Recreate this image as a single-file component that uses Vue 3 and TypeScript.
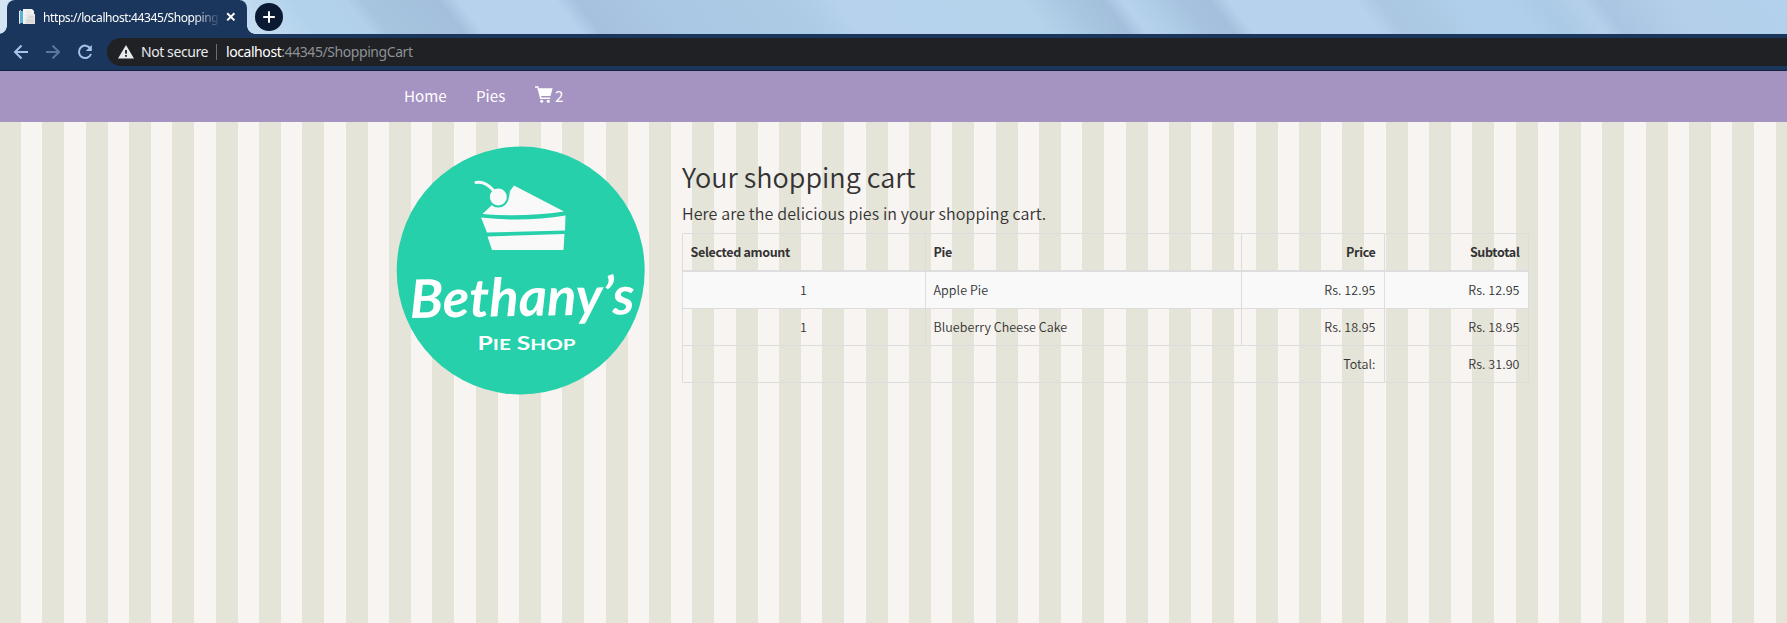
<script setup lang="ts">
interface CartLine {
  amount: number
  name: string
  price: number
}

const lines: CartLine[] = [
  { amount: 1, name: 'Apple Pie', price: 12.95 },
  { amount: 1, name: 'Blueberry Cheese Cake', price: 18.95 },
]

const money = (value: number): string => `Rs. ${value.toFixed(2)}`
const total = lines.reduce((sum, line) => sum + line.amount * line.price, 0)
const count = lines.reduce((sum, line) => sum + line.amount, 0)

const sheen: [number, string][] = [
  [0, '#d3e4f4'], [235, '#c4dcf1'], [290, '#b2d2ec'], [345, '#b2d0ea'], [362, '#a8c5e0'],
  [438, '#a3bfdb'], [458, '#b6d2ed'], [555, '#b6d2ed'], [576, '#a6c1de'], [660, '#aac7e3'],
  [790, '#adcbe5'], [835, '#b6d2ec'], [1020, '#b6d3ec'], [1070, '#a9c6e0'], [1102, '#a3bfdb'],
  [1122, '#b6d2ed'], [1150, '#b0cde8'], [1180, '#a6c2de'], [1208, '#a3bfdb'], [1228, '#b6d2ed'],
  [1355, '#b6d2ed'], [1378, '#abc7e2'], [1420, '#adcae4'], [1455, '#b0cfeb'], [1510, '#b0cfeb'],
  [1540, '#abcae5'], [1580, '#b5d0eb'], [1600, '#a9c5e1'], [1640, '#afcbe6'], [1670, '#b4cfea'], [1787, '#b2d1ec'],
]
</script>

<template>
  <div class="window">
    <header class="tabstrip">
      <svg class="sheen" width="1787" height="34">
        <defs>
          <linearGradient id="sheen" gradientUnits="userSpaceOnUse" x1="0" y1="0" x2="1787" y2="0" gradientTransform="skewX(38)">
            <stop v-for="[x, color] in sheen" :key="x" :offset="x / 1787" :stop-color="color" />
          </linearGradient>
        </defs>
        <rect width="1787" height="34" fill="url(#sheen)" />
      </svg>
      <div class="tab">
        <svg class="favicon" width="16" height="16" viewBox="0 0 16 16">
          <path d="M0 2 2 1v13l-2 1z" fill="#eee" />
          <path d="M1 2h3v12H1z" fill="#5fb0d8" />
          <path d="M4 0h9l2 2v13H4z" fill="#f3f3f2" />
          <path d="M7 3h5M6 6h3M6 9h3" stroke="#dcdcdc" />
          <path d="M8 5h8v10H6v-5h2z" fill="#e5e5e5" />
          <path d="M9 8h6M8 11h7M8 13h7" stroke="#ccc" />
        </svg>
        <span class="tab-title">https://localhost:44345/Shopping</span>
        <svg class="close" width="10" height="10" viewBox="0 0 10 10"><path d="m1.2 1.2 7.2 7.2m0-7.2L1.2 8.4" /></svg>
      </div>
      <div class="new-tab">
        <svg width="14" height="14" viewBox="0 0 14 14"><path d="M7 1.2v11.6M1.2 7h11.6" /></svg>
      </div>
    </header>
    <div class="toolbar">
      <svg class="tool" width="16" height="16" viewBox="0 0 16 16"><path d="M15 8H2m6.5-6.5L2 8l6.5 6.5" /></svg>
      <svg class="tool dim" width="16" height="16" viewBox="0 0 16 16"><path d="M1 8h13M7.500 1.500 14 8l-6.500 6.500" /></svg>
      <svg class="tool" width="16" height="16" viewBox="0 0 16 16">
        <path d="M13.300 4.300A6.200 6.200 0 1 0 14 10" /><path class="fill" d="M14.800 1v6H8.800z" />
      </svg>
      <div class="address">
        <svg class="warn" width="16" height="14" viewBox="0 0 16 14">
          <path d="M8 0 16 13.500H0z" fill="#e8eaed" /><path d="M8 5v3.800M8 10v1.800" stroke="#202124" stroke-width="1.800" />
        </svg>
        <span class="insecure">Not secure</span>
        <i class="divider"></i>
        <span class="url"><b>localhost</b>:44345/ShoppingCart</span>
      </div>
    </div>
    <nav class="nav">
      <a class="home">Home</a>
      <a class="pies">Pies</a>
      <a class="cart">
        <svg width="18" height="18" viewBox="0 0 18 18">
          <path d="M0 .3h3.300L4 2.200h13.600L15.500 10H6l.4 1.600h8.800V13H5.200L2.300 1.700H0z" fill="#fff" />
          <circle cx="6.700" cy="15.300" r="1.500" fill="#fff" /><circle cx="13.300" cy="15.300" r="1.500" fill="#fff" />
        </svg>
        <span>{{ count }}</span>
      </a>
    </nav>
    <main class="page">
      <svg class="logo" width="250" height="250" viewBox="0 0 250 250">
        <circle cx="124.700" cy="124.500" r="124" fill="#25d0aa" />
        <g fill="#f9f9f9">
          <path d="M86.500 68 97 58q12 3 16-7l1-6 4-5.500 50 26q-41 6-81.500 2.500z" />
          <path d="M85 71.500q43 5 84.500-2L169 84.500l-78 2z" />
          <path d="M91.500 90.500 168.500 88l-1 16H96z" />
          <circle cx="102.300" cy="51" r="10.500" fill="#25d0aa" />
          <circle cx="102.300" cy="51" r="8.500" />
          <path d="M80 36.500q9-2 17.500 8" fill="none" stroke="#f9f9f9" stroke-width="3" stroke-linecap="round" />
        </g>
        <text class="script" x="14" y="170" textLength="225" lengthAdjust="spacingAndGlyphs" transform="rotate(-1 125 170)">Bethany’s</text>
        <text class="caps" x="81.500" y="203.500" textLength="98" lengthAdjust="spacingAndGlyphs">P<tspan class="low">IE</tspan> S<tspan class="low">HOP</tspan></text>
      </svg>
      <section class="content">
        <h2>Your shopping cart</h2>
        <h4>Here are the delicious pies in your shopping cart.</h4>
        <table>
          <colgroup><col class="c1" /><col class="c2" /><col class="c3" /><col class="c4" /></colgroup>
          <thead>
            <tr><th>Selected amount</th><th>Pie</th><th class="right">Price</th><th class="right">Subtotal</th></tr>
          </thead>
          <tbody>
            <tr v-for="line in lines" :key="line.name">
              <td class="center">{{ line.amount }}</td>
              <td>{{ line.name }}</td>
              <td class="right">{{ money(line.price) }}</td>
              <td class="right">{{ money(line.amount * line.price) }}</td>
            </tr>
          </tbody>
          <tfoot>
            <tr><td colspan="3" class="right">Total:</td><td class="right">{{ money(total) }}</td></tr>
          </tfoot>
        </table>
      </section>
    </main>
  </div>
</template>

<style>
body {
  margin: 0;
  overflow: hidden;
}
</style>

<style scoped>
.window {
  width: 1787px;
  height: 623px;
  overflow: hidden;
  display: flex;
  flex-direction: column;
  font-family: "Noto Sans CJK SC", "Noto Sans", sans-serif;
  color: #333;
}
svg { display: block; flex: none; }
.tabstrip {
  position: relative;
  height: 34px;
  display: flex;
  flex: none;
  font-family: "Noto Sans", sans-serif;
}
.sheen { position: absolute; left: 0; top: 0; }
.tab {
  position: relative;
  width: 240px;
  height: 34px;
  margin-left: 7px;
  box-sizing: border-box;
  padding-left: 12px;
  display: flex;
  align-items: center;
  background: #1b365d;
  border-radius: 8px 8px 0 0;
}
.tab::before, .tab::after {
  content: "";
  position: absolute;
  bottom: 0;
  width: 8px;
  height: 8px;
}
.tab::before { left: -8px; background: radial-gradient(circle at 0 0, transparent 7.500px, #1b365d 8px); }
.tab::after { right: -8px; background: radial-gradient(circle at 100% 0, transparent 7.500px, #1b365d 8px); }
.tab-title {
  width: 176px;
  margin-left: 8px;
  overflow: hidden;
  white-space: nowrap;
  font-size: 12px;
  letter-spacing: -0.400px;
  color: #fff;
  mask-image: linear-gradient(90deg, #000 150px, transparent 178px);
}
.close { margin-left: 7px; }
.close path, .new-tab path { stroke: #fff; stroke-width: 2; fill: none; }
.new-tab {
  position: relative;
  width: 28px;
  height: 28px;
  margin: 3px 0 0 8px;
  border-radius: 50%;
  background: #0b1a33;
  display: flex;
  align-items: center;
  justify-content: center;
}
.toolbar {
  height: 37px;
  flex: none;
  box-sizing: border-box;
  padding: 0 0 0 13px;
  display: flex;
  align-items: center;
  background: #1b365d;
  border-bottom: 1px solid #10223f;
  font-family: "Noto Sans", sans-serif;
}
.tool { margin-right: 16px; }
.tool path { fill: none; stroke: #a9c3e6; stroke-width: 2; }
.tool .fill { fill: #a9c3e6; stroke: none; }
.dim { opacity: 0.45; }
.address {
  flex: 1;
  height: 28px;
  margin-left: -2px;
  box-sizing: border-box;
  padding-left: 11px;
  display: flex;
  align-items: center;
  border-radius: 14px 0 0 14px;
  background: #202124;
  font-size: 14px;
  white-space: nowrap;
}
.insecure, .url { padding-bottom: 2px; }
.insecure { margin-left: 7px; width: 68px; color: #e8eaed; letter-spacing: -0.420px; }
.divider { width: 1px; height: 16px; margin: 0 9px 0 7px; background: #6d6e71; }
.url { color: #8e9195; letter-spacing: -0.430px; }
.url b { font-weight: 400; color: #fff; }
.nav {
  height: 51px;
  flex: none;
  box-sizing: border-box;
  padding: 0 0 3px 404px;
  display: flex;
  align-items: center;
  background: #a593c2;
  color: #fff;
  font-size: 15.200px;
}
.home { width: 72px; }
.pies { width: 59px; }
.cart { display: flex; align-items: center; gap: 2px; }
.page {
  flex: 1;
  display: flex;
  align-items: flex-start;
  padding: 24px 0 0 396px;
  background: repeating-linear-gradient(90deg, #e5e4d8 0 21px, #f8f4f1 21px 42px, #e5e4d8 42px 64px, #f8f4f1 64px 86px, #e5e4d8 86px 108px, #f8f4f1 108px 129px, #e5e4d8 129px 130px);
}
.content { margin-left: 36px; width: 847px; font-weight: 350; }
h2 { margin: 13px 0 0; height: 40px; font-size: 27px; line-height: 36px; font-weight: 350; letter-spacing: 0.020px; }
h4 { margin: 0; height: 34px; font-size: 16px; line-height: 28px; font-weight: 350; letter-spacing: 0.120px; }
table {
  width: 847px;
  table-layout: fixed;
  border-collapse: collapse;
  font-size: 12.500px;
  line-height: 20px;
  letter-spacing: 0.060px;
}
.c1 { width: 243px; }
.c2 { width: 316px; }
.c3 { width: 143px; }
.c4 { width: 144px; }
th, td { border: 1px solid #ddd; padding: 8px 8.500px 8px 7.500px; text-align: left; vertical-align: top; }
th { border-bottom-width: 2px; font-weight: 700; letter-spacing: -0.330px; }
tbody tr:nth-child(odd) { background: #f9f9f9; }
td.center { text-align: center; }
th.right, td.right { text-align: right; }
.script { font: italic 700 53px Lato, sans-serif; fill: #fff; }
.caps { font: 700 18px Lato, sans-serif; fill: #fff; }
.low { font-size: 15px; }
</style>
